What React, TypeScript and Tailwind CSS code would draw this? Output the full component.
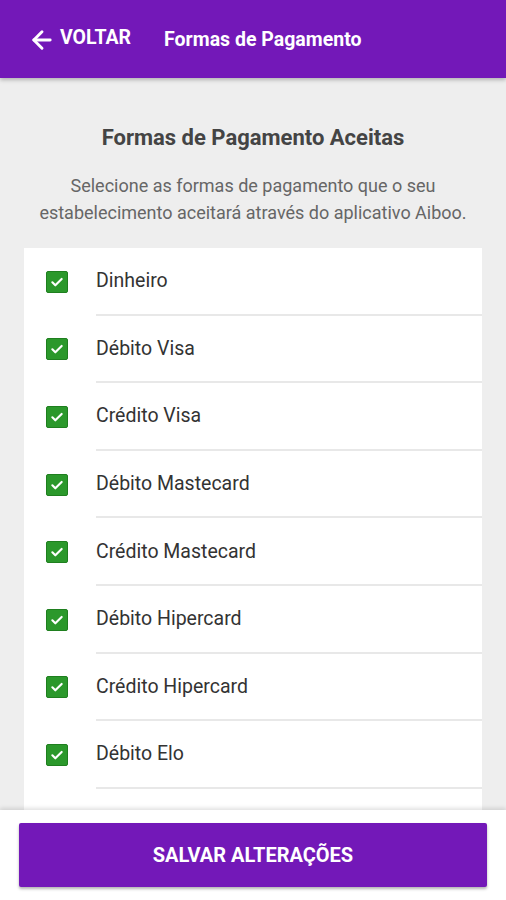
import { ArrowLeft } from "lucide-react";

const methods = [
  "Dinheiro",
  "Débito Visa",
  "Crédito Visa",
  "Débito Mastecard",
  "Crédito Mastecard",
  "Débito Hipercard",
  "Crédito Hipercard",
  "Débito Elo",
];

function CheckBox() {
  return (
    <span className="flex h-[22px] w-[22px] flex-none items-center justify-center rounded-[2px] border border-[#1f7f1f] bg-[#2b982b]">
      <svg viewBox="0 0 24 24" className="h-[16px] w-[16px]" fill="none">
        <path d="M5 12.5l4.5 4.5L19 7.5" stroke="white" strokeWidth="3.2" strokeLinecap="round" strokeLinejoin="round" />
      </svg>
    </span>
  );
}

export default function App() {
  return (
    <div className="flex h-[900px] w-full flex-col overflow-hidden bg-[#eeeeee] font-['Roboto',sans-serif]">
      <header className="relative z-10 flex h-[78px] flex-none items-center bg-[#7318b8] pl-[28px] pt-[2px] text-white shadow-[0_2px_4px_rgba(0,0,0,0.25)]">
        <ArrowLeft className="h-[28px] w-[28px]" strokeWidth={2.5} />
        <span className="ml-[4px] -translate-y-[2px] text-[19.5px] font-bold">VOLTAR</span>
        <span className="ml-[33px] text-[19.5px] font-bold">Formas de Pagamento</span>
      </header>

      <main className="flex min-h-0 flex-1 flex-col overflow-hidden px-[24px]">
        <h1 className="mt-[45px] text-center text-[22px] font-bold leading-[30px] text-[#444444]">
          Formas de Pagamento Aceitas
        </h1>
        <p className="mt-[19px] text-center text-[18px] leading-[27px] text-[#666666]">
          Selecione as formas de pagamento que o seu
          <br />
          estabelecimento aceitará através do aplicativo Aiboo.
        </p>
        <ul className="mt-[22px] flex-1 bg-white">
          {methods.map((name) => (
            <li key={name} className="flex h-[67.6px] items-center">
              <div className="flex w-[72px] flex-none justify-start pl-[22px]">
                <CheckBox />
              </div>
              <div className="flex h-full flex-1 items-center border-b-2 border-[#e8e8e8] text-[19.5px] text-[#333333]">
                {name}
              </div>
            </li>
          ))}
        </ul>
      </main>

      <footer className="relative z-10 flex h-[90px] flex-none items-start bg-white px-[19px] pt-[13px] shadow-[0_-2px_4px_rgba(0,0,0,0.12)]">
        <button className="h-[64px] w-full rounded-[2px] bg-[#7318b8] text-[20px] font-bold text-white shadow-[0_2px_3px_rgba(0,0,0,0.3)]">
          SALVAR ALTERAÇÕES
        </button>
      </footer>
    </div>
  );
}
